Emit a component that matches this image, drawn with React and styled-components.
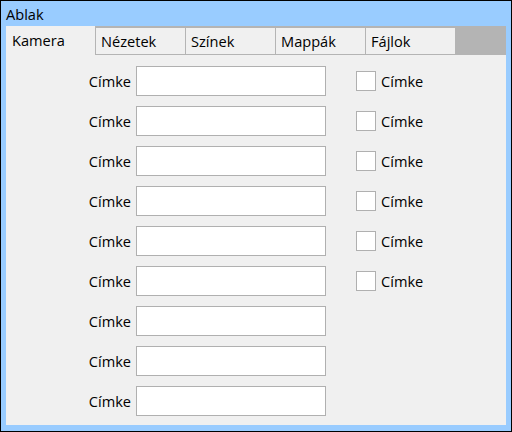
import React from "react";
import styled, { createGlobalStyle } from "styled-components";

const Global = createGlobalStyle`
  html, body { margin: 0; padding: 0; }
  body { font-family: "Open Sans", "Noto Sans", sans-serif; color: #000; }
  * { box-sizing: border-box; }
`;

const Window = styled.div`
  width: 512px;
  height: 432px;
  border: 1px solid #000;
  background: #99ccff;
  padding: 0 5px 6px 5px;
  display: flex;
  flex-direction: column;
`;

const TitleBar = styled.div`
  height: 25px;
  flex: none;
  display: flex;
  align-items: center;
  padding-left: 0px;
  font-size: 14.6px;
`;

const TabStrip = styled.div`
  height: 29px;
  flex: none;
  background: #b4b4b4;
  display: flex;
  align-items: flex-start;
  gap: 1px;
`;

const Tab = styled.div`
  width: 89px;
  height: ${(p) => (p.$active ? "29px" : "26px")};
  margin-top: ${(p) => (p.$active ? "0" : "2px")};
  background: #f0f0f0;
  font-size: 14.6px;
  display: flex;
  align-items: center;
  padding-left: ${(p) => (p.$active ? "6px" : "5px")};
  padding-bottom: ${(p) => (p.$active ? "2px" : "0")};
`;

const Panel = styled.div`
  flex: 1;
  background: #f0f0f0;
  padding-top: 11px;
  display: grid;
  grid-template-columns: 130px 190px 30px auto;
  grid-auto-rows: 30px;
  row-gap: 10px;
  align-content: start;
  font-size: 14.6px;
`;

const Label = styled.div`
  grid-column: 1;
  display: flex;
  align-items: center;
  justify-content: flex-end;
  padding-right: 5px;
`;

const Input = styled.div`
  grid-column: 2;
  background: #fff;
  border: 1px solid #b0b0b0;
`;

const CheckCell = styled.label`
  grid-column: 4;
  display: flex;
  align-items: center;
  gap: 5px;
`;

const Box = styled.span`
  width: 20px;
  height: 20px;
  background: #fff;
  border: 1px solid #b0b0b0;
`;

const tabs = ["Kamera", "Nézetek", "Színek", "Mappák", "Fájlok"];

export default function App() {
  const rows = Array.from({ length: 9 }, (_, i) => i);
  return (
    <>
      <Global />
      <Window>
        <TitleBar>Ablak</TitleBar>
        <TabStrip>
          {tabs.map((t, i) => (
            <Tab key={t} $active={i === 0}>
              {t}
            </Tab>
          ))}
        </TabStrip>
        <Panel>
          {rows.map((i) => (
            <React.Fragment key={i}>
              <Label style={{ gridRow: i + 1 }}>Címke</Label>
              <Input style={{ gridRow: i + 1 }} />
              {i < 6 && (
                <CheckCell style={{ gridRow: i + 1 }}>
                  <Box />
                  Címke
                </CheckCell>
              )}
            </React.Fragment>
          ))}
        </Panel>
      </Window>
    </>
  );
}
